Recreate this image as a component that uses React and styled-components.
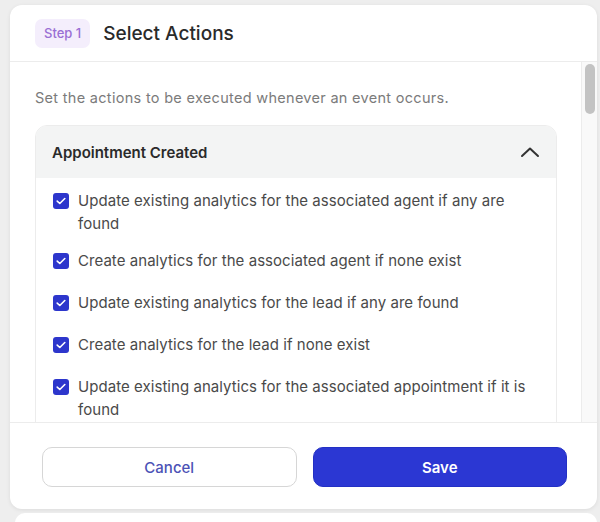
import styled, { createGlobalStyle } from "styled-components";

const GlobalStyle = createGlobalStyle`
  html, body {
    margin: 0;
    padding: 0;
    background: #eeeeee;
    font-family: Inter, "Noto Sans", sans-serif;
  }
  * { box-sizing: border-box; }
`;

const actions = [
  "Update existing analytics for the associated agent if any are found",
  "Create analytics for the associated agent if none exist",
  "Update existing analytics for the lead if any are found",
  "Create analytics for the lead if none exist",
  "Update existing analytics for the associated appointment if it is found",
];

const Check = () => (
  <svg width="10" height="8" viewBox="0 0 10 8" fill="none">
    <path d="M1.2 4.1L3.8 6.5L8.8 1.5" stroke="#fff" strokeWidth="1.6" strokeLinecap="round" strokeLinejoin="round" />
  </svg>
);

const ChevronUp = () => (
  <svg width="20" height="12" viewBox="0 0 20 12" fill="none">
    <path d="M2 10L10 2.5L18 10" stroke="#333" strokeWidth="2" strokeLinecap="round" strokeLinejoin="round" />
  </svg>
);

const App = () => {
  return (
    <>
      <GlobalStyle />
      <Page>
        <Modal>
          <Header>
            <StepBadge>Step 1</StepBadge>
            <Title>Select Actions</Title>
          </Header>
          <Body>
            <Content>
              <Description>Set the actions to be executed whenever an event occurs.</Description>
              <Accordion>
                <AccordionHead>
                  <AccordionTitle>Appointment Created</AccordionTitle>
                  <ChevronUp />
                </AccordionHead>
                <ActionList>
                  {actions.map((action, i) => (
                    <ActionRow key={i}>
                      <BoxSlot>
                        <Box>
                          <Check />
                        </Box>
                      </BoxSlot>
                      <ActionText>{action}</ActionText>
                    </ActionRow>
                  ))}
                </ActionList>
              </Accordion>
            </Content>
            <ScrollTrack>
              <ScrollThumb />
            </ScrollTrack>
          </Body>
          <Footer>
            <Button>Cancel</Button>
            <Button $primary>Save</Button>
          </Footer>
        </Modal>
        <NextCard />
      </Page>
    </>
  );
};

const Page = styled.div`
  padding: 5px 3px 0 10px;
  display: flex;
  flex-direction: column;
  gap: 4px;
  height: 522px;
  overflow: hidden;
`;

const Modal = styled.div`
  background: #fff;
  border-radius: 12px;
  box-shadow: 0 1px 4px rgba(0, 0, 0, 0.08);
  height: 504px;
  display: flex;
  flex-direction: column;
  overflow: hidden;
  flex-shrink: 0;
`;

const Header = styled.div`
  height: 57px;
  flex-shrink: 0;
  display: flex;
  align-items: center;
  gap: 13px;
  padding: 0 25px;
  border-bottom: 1px solid #ececec;
`;

const StepBadge = styled.span`
  background: #f4eefc;
  color: #9a6fd4;
  font-size: 13px;
  font-weight: 500;
  border-radius: 7px;
  padding: 0 9px;
  height: 29px;
  line-height: 29px;
  margin-top: 1px;
`;

const Title = styled.h2`
  margin: 0;
  font-size: 19px;
  font-weight: 500;
  color: #2a2a2a;
`;

const Body = styled.div`
  flex: 1;
  min-height: 0;
  display: flex;
`;

const Content = styled.div`
  flex: 1;
  min-width: 0;
  overflow: hidden;
  padding: 26px 24px 0 25px;
  display: flex;
  flex-direction: column;
  gap: 17px;
`;

const ScrollTrack = styled.div`
  width: 16px;
  flex-shrink: 0;
  background: #f9f9f9;
  border-left: 1px solid #ececec;
  padding: 2px 2px 0 3px;
`;

const ScrollThumb = styled.div`
  height: 50px;
  border-radius: 5px;
  background: #c3c3c3;
`;

const Description = styled.p`
  margin: 0;
  font-size: 14.5px;
  letter-spacing: 0.3px;
  line-height: 20px;
  color: #7b7b7b;
`;

const Accordion = styled.section`
  border: 1px solid #ececec;
  border-radius: 12px;
  flex-shrink: 0;
  overflow: hidden;
`;

const AccordionHead = styled.div`
  height: 52px;
  background: #f3f4f4;
  display: flex;
  align-items: center;
  justify-content: space-between;
  padding: 0 16px 0 16px;
`;

const AccordionTitle = styled.span`
  font-size: 15px;
  font-weight: 600;
  color: #2a2a2a;
`;

const ActionList = styled.div`
  padding: 6px 15px 18px 17px;
  display: flex;
  flex-direction: column;
  gap: 9px;
`;

const ActionRow = styled.label`
  display: flex;
  align-items: flex-start;
  gap: 9px;
  min-height: 33px;
`;

const BoxSlot = styled.span`
  height: 33px;
  display: flex;
  align-items: center;
  flex-shrink: 0;
`;

const Box = styled.span`
  width: 16px;
  height: 16px;
  border-radius: 3px;
  background: #2d36cc;
  display: flex;
  align-items: center;
  justify-content: center;
`;

const ActionText = styled.span`
  padding-top: 5px;
  font-size: 15px;
  letter-spacing: 0.05px;
  line-height: 23px;
  color: #4a4a4a;
`;

const Footer = styled.div`
  flex-shrink: 0;
  border-top: 1px solid #ececec;
  padding: 24px 30px 22px 32px;
  display: grid;
  grid-template-columns: 1fr 1fr;
  gap: 16px;
`;

const Button = styled.button`
  height: 40px;
  border-radius: 10px;
  font-family: inherit;
  font-size: 15px;
  font-weight: ${(p) => (p.$primary ? 600 : 500)};
  color: ${(p) => (p.$primary ? "#fff" : "#4c52b6")};
  background: ${(p) => (p.$primary ? "#2b37d3" : "#fff")};
  border: 1px solid ${(p) => (p.$primary ? "#2330c4" : "#d6d6d6")};
  cursor: pointer;
`;

const NextCard = styled.div`
  background: #fff;
  border-radius: 10px;
  height: 40px;
  margin-left: 5px;
  flex-shrink: 0;
`;

export default App;
